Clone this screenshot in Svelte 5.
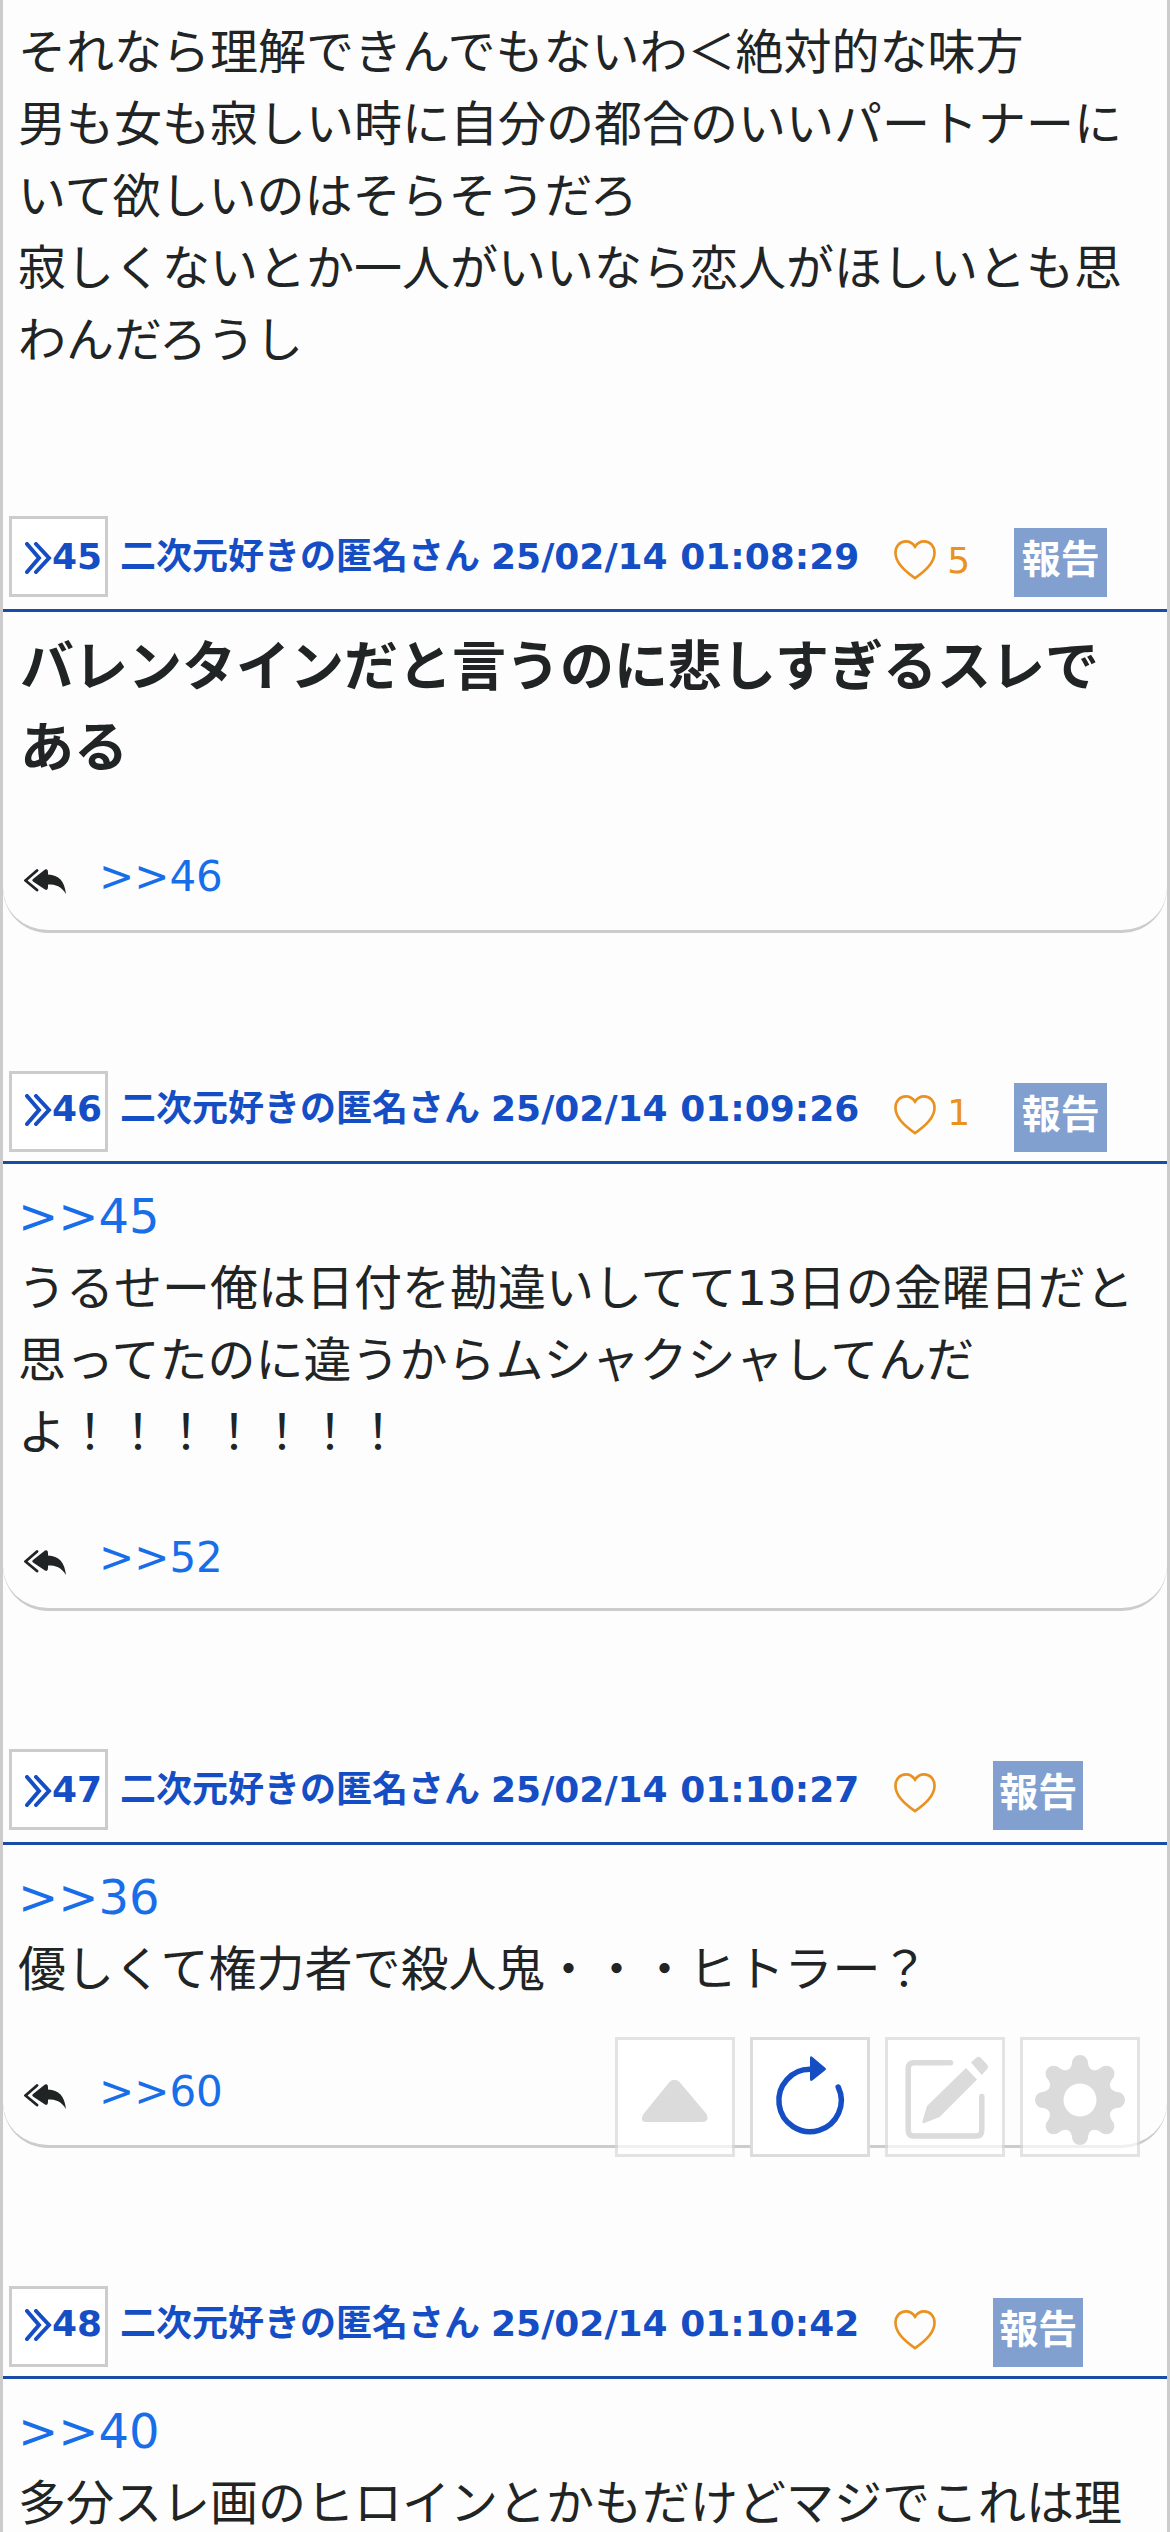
<script lang="ts">
  type Post = {
    id: number;
    date: string;
    likes?: number;
    anchor?: number;
    text: string;
    strong?: boolean;
    reply?: number;
  };

  const name = '二次元好きの匿名さん';

  const posts: Post[] = [
    {
      id: 45,
      date: '25/02/14 01:08:29',
      likes: 5,
      text: 'バレンタインだと言うのに悲しすぎるスレである',
      strong: true,
      reply: 46,
    },
    {
      id: 46,
      date: '25/02/14 01:09:26',
      likes: 1,
      anchor: 45,
      text: 'うるせー俺は日付を勘違いしてて13日の金曜日だと思ってたのに違うからムシャクシャしてんだよ！！！！！！！',
      reply: 52,
    },
    {
      id: 47,
      date: '25/02/14 01:10:27',
      anchor: 36,
      text: '優しくて権力者で殺人鬼・・・ヒトラー？',
      reply: 60,
    },
    {
      id: 48,
      date: '25/02/14 01:10:42',
      anchor: 40,
      text: '多分スレ画のヒロインとかもだけどマジでこれは理',
    },
  ];
</script>

<main class="thread">
  <div class="body first">
    <p>それなら理解できんでもないわ＜絶対的な味方</p>
    <p>男も女も寂しい時に自分の都合のいいパートナーにいて欲しいのはそらそうだろ</p>
    <p>寂しくないとか一人がいいなら恋人がほしいとも思わんだろうし</p>
  </div>

  {#each posts as post}
    <article class="post p{post.id}" class:tight={post.id % 2 === 0}>
      <header>
        <a class="num" href="#{post.id}">
          <svg viewBox="0 0 27 32" width="27" height="32"><path d="M2 2 14 16 2 30M11 2 24 16 11 30" /></svg>{post.id}
        </a>
        <span class="meta">{name} <span class="date">{post.date}</span></span>
        <button class="like">
          <svg viewBox="0 0 44 42" width="42" height="40"><path d="M22 7C19 2.500 15 1.500 12.500 1.500 6 1.500 1.500 6.500 1.500 13.500 1.500 23 10 32 22 40 34 32 42.500 23 42.500 13.500 42.500 6.500 38 1.500 31.500 1.500 29 1.500 25 2.500 22 7Z" /></svg>
          {#if post.likes}<span>{post.likes}</span>{/if}
        </button>
        <button class="report" class:alone={!post.likes}>報告</button>
      </header>
      <div class="body" class:strong={post.strong}>
        {#if post.anchor}<a href="#{post.anchor}">&gt;&gt;{post.anchor}</a>{/if}
        <p>{post.text}</p>
      </div>
      {#if post.reply}
        <footer>
          <svg viewBox="0 0 42 26" width="42" height="26">
            <path class="stroke" d="M13 1.500 1.500 11.500 13 21" />
            <path d="M9 10 21 .600Q24-.800 24 3V5.500C35 6 40.500 12 42 25 37 17 32 15.500 24 15.500V18Q24 22 21 20.500L9 12.500Q7.500 11.300 9 10Z" />
          </svg>
          <a href="#{post.reply}">&gt;&gt;{post.reply}</a>
        </footer>
      {/if}
    </article>
  {/each}
</main>

<nav class="tools">
  <button aria-label="top">
    <svg viewBox="0 0 120 120"><path d="M54.500 45Q59.500 40.500 64.500 45L91.500 77Q95 85 87 85H32Q24 85 28.500 77Z" /></svg>
  </button>
  <button class="active" aria-label="reload">
    <svg viewBox="0 0 120 120"><path class="line" d="M61 32.300A31.200 31.200 0 1 0 88.200 50" /><path d="M60 21Q60 18 63 20.500L75.500 31Q76.500 32 75.500 33L63 43Q60 45.500 60 42Z" /></svg>
  </button>
  <button aria-label="write">
    <svg viewBox="0 0 120 120"><path class="line" d="M65.500 25.700H29Q23.200 25.700 23.200 31.500V93Q23.200 99 29 99H91Q96.800 99 96.800 93V59.500" /><path d="M81 31 92 42.500 54.500 80 39.500 86Q37 87 37.500 84L42 69ZM86 25.500 91.500 20.500Q93.500 19 95.500 20.500L102 27.500Q104 30 102 32L96.800 38Z" /></svg>
  </button>
  <button aria-label="settings">
    <svg viewBox="0 0 120 120"><path fill-rule="evenodd" d="M52 26A8 8 0 0 1 68 26C69 34 75 35 80.500 31A8 8 0 0 1 92 42.600C88 48 90 54 97 55A8 8 0 0 1 97 71C90 72 88 78 92 83.400A8 8 0 0 1 80.500 95C75 91 69 92 68 100A8 8 0 0 1 52 100C51 92 45 91 39.500 95A8 8 0 0 1 28 83.400C32 78 30 72 23 71A8 8 0 0 1 23 55C30 54 32 48 28 42.600A8 8 0 0 1 39.500 31C45 35 51 34 52 26ZM60 46.500A16.500 16.500 0 1 0 60 79.500 16.500 16.500 0 1 0 60 46.500Z" /></svg>
  </button>
</nav>

<style>
  :global(body) {
    background: #fdfdfd;
    overflow: hidden;
  }

  .thread {
    box-sizing: border-box;
    height: 2532px;
    overflow: hidden;
    border: solid #ccc;
    border-width: 0 3px;
    color: #212424;
    font: 48px/72px 'DejaVu Sans', 'Noto Sans CJK JP', sans-serif;
  }

  p {
    margin: 0;
  }

  a {
    color: #186ee9;
    text-decoration: none;
  }

  button {
    border: 0;
    padding: 0;
    font: inherit;
  }

  svg {
    display: block;
    flex: none;
  }

  .body {
    padding: 16px 15px 0;
  }

  .body.first {
    height: 500px;
  }

  .body a {
    display: block;
  }

  .body.strong {
    padding: 15px 17px 0;
    font-size: 54px;
    font-weight: bold;
    line-height: 81px;
  }

  .p45 { height: 555px; }
  .p46 { height: 678px; }
  .p47 { height: 537px; }

  header {
    box-sizing: border-box;
    display: flex;
    align-items: flex-start;
    height: 96px;
    padding-left: 6px;
    border-bottom: 3px solid #194ba8;
    color: #154ec4;
    font-size: 36px;
    font-weight: bold;
    line-height: 54px;
  }

  .num {
    box-sizing: border-box;
    display: flex;
    width: 99px;
    height: 81px;
    padding: 11px 0 0 13px;
    border: 3px solid #ccc;
    background: #fff;
    color: inherit;
  }

  .num svg {
    margin-top: 12px;
    fill: none;
    stroke: currentColor;
    stroke-width: 4;
    stroke-linecap: round;
  }

  .meta {
    margin-left: 12px;
    padding-top: 14px;
    white-space: nowrap;
  }

  .date {
    margin-left: -1.5px;
  }

  .like {
    display: flex;
    gap: 11px;
    margin: 24px 0 0 35px;
    background: none;
    color: #ea9220;
    font-size: 36px;
    font-weight: normal;
    line-height: 42px;
  }

  .like svg {
    fill: none;
    stroke: currentColor;
    stroke-width: 2.8;
  }

  .report {
    width: 93px;
    height: 69px;
    margin: 12px 0 0 44px;
    padding-bottom: 5px;
    background: #819fcf;
    color: #fff;
    font-size: 39px;
    font-weight: bold;
    line-height: 64px;
  }

  .report.alone {
    width: 90px;
    margin-left: 57px;
  }

  /* headers whose text sits one step higher */
  .tight header { height: 93px; }
  .tight .num { padding-top: 8px; }
  .tight .meta { padding-top: 11px; }
  .tight .like span { margin-top: -3px; }

  footer {
    box-sizing: border-box;
    display: flex;
    height: 94px;
    margin-top: 49px;
    padding: 6px 21px 0;
    border-bottom: 3px solid #ccc;
    border-radius: 0 0 45px 45px;
    font-size: 42px;
    line-height: 63px;
  }

  .strong + footer {
    margin-top: 50px;
  }

  .tight footer {
    height: 91px;
    margin-top: 52px;
  }

  footer svg {
    margin: 24px 33px 0 0;
    fill: #212424;
  }

  footer .stroke {
    fill: none;
    stroke: #212424;
    stroke-width: 2.8;
    stroke-linecap: round;
  }

  .tools {
    position: fixed;
    top: 2037px;
    left: 615px;
    display: flex;
    gap: 15px;
  }

  .tools button {
    box-sizing: border-box;
    width: 120px;
    height: 120px;
    border: 3px solid #d8d8d8;
    background: #fff;
    color: #ccc;
    opacity: 0.7;
  }

  .tools .active {
    border-color: #dcdcdc;
    color: #154ec4;
    opacity: 1;
  }

  .tools svg {
    margin: -3px;
    width: 120px;
    height: 120px;
    fill: currentColor;
  }

  .tools .line {
    fill: none;
    stroke: currentColor;
    stroke-width: 5.5;
    stroke-linecap: round;
  }
</style>
